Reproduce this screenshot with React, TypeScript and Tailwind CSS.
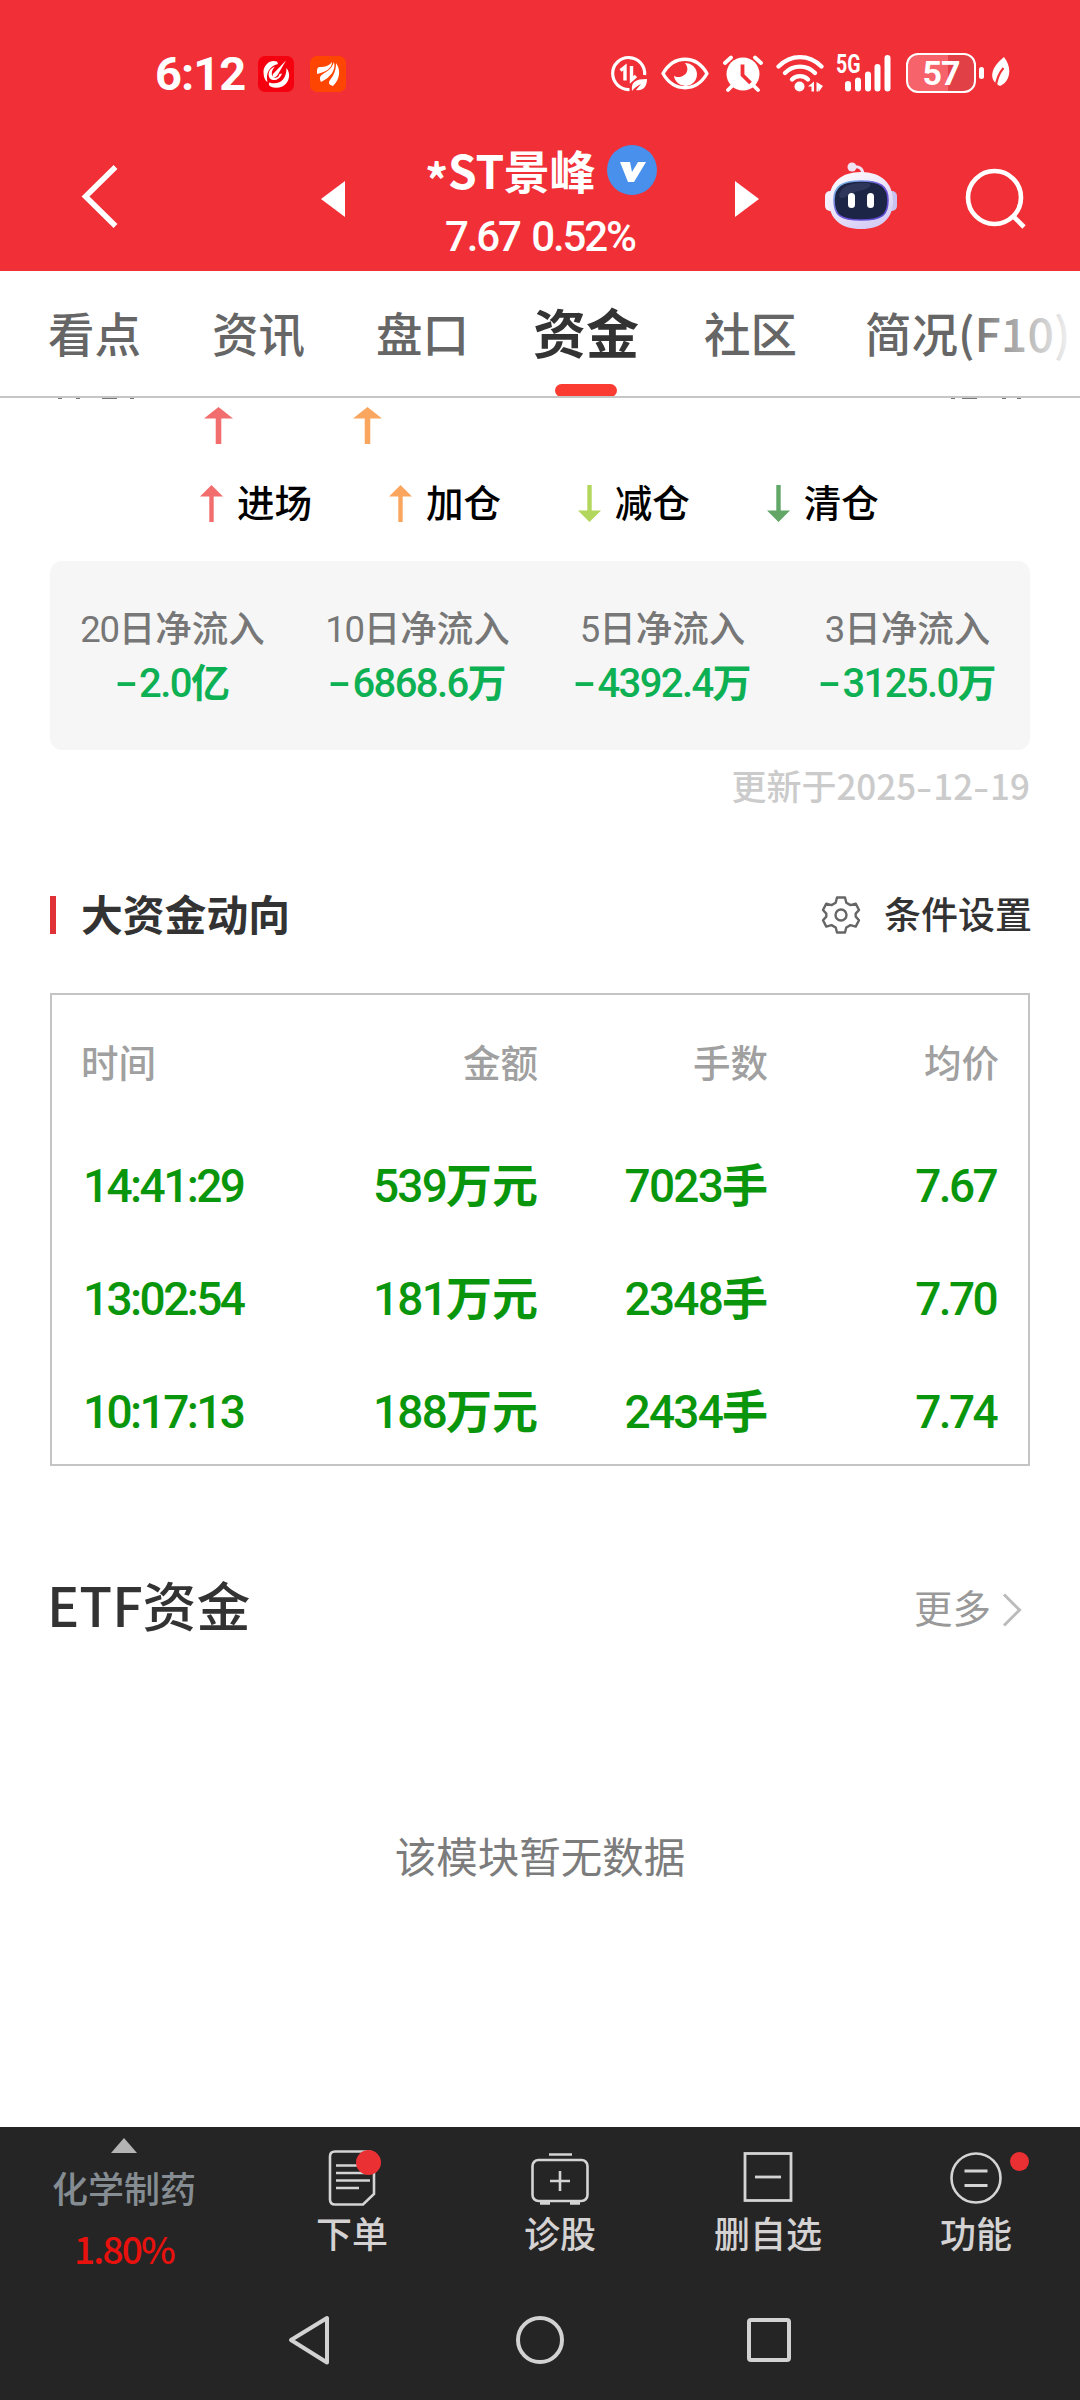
import React from "react";

const CJK = "font-['Noto_Sans_CJK_SC',sans-serif]";
const NUM = "font-['Roboto','Noto_Sans_CJK_SC',sans-serif]";

function Arrow({ color, down = false, wide = false }: { color: string; down?: boolean; wide?: boolean }) {
  return (
    <svg
      width={wide ? 29 : 23}
      height="37"
      viewBox="0 0 24 37"
      preserveAspectRatio="none"
      className={down ? "rotate-180" : ""}
    >
      <path d="M12 0L24 11.5H14.3V37H9.7V11.5H0Z" fill={color} />
    </svg>
  );
}

function Dash() {
  return (
    <span className="inline-block w-[24px] text-left">
      <span className="inline-block origin-left scale-x-[1.7]">-</span>
    </span>
  );
}

/* ---------- status bar ---------- */

function StatusBar() {
  return (
    <div className="flex h-[147px] pt-[52px] text-white">
      <div className={`${NUM} ml-[155px] h-[44px] w-[103px] text-[47px] leading-[44px] font-bold tracking-[-1px]`}>6:12</div>
      <svg width="36" height="36" viewBox="0 0 36 36" className="mt-1">
        <rect width="36" height="36" rx="7" fill="#f5000f" />
        <path d="M19 5.500C12 3 6 9 5.500 15c0 5 1 9 4 11C7.500 18 11 10 20 8Z" fill="#fff" />
        <path d="M28 4.500L19 20l-5.500 3 1.500-5Z" fill="#fff" />
        <path d="M28.500 12c4 5 3 11 0 15-4 5-11 6-16 3.500-2-1.500-2-3-1-4 9 3 17-2 17-14.500Z" fill="#fff" />
        <path d="M17 10.500c-6 2-8 8-5 12 4 3.500 10 1 12-5l-2.500 .5c-1 4-4.500 5-7 2.500-1.500-3-.5-7 2.500-10Z" fill="#fff" />
      </svg>
      <svg width="36" height="36" viewBox="0 0 36 36" className="mt-1 ml-4">
        <rect width="36" height="36" rx="7" fill="#ff4502" />
        <path d="M7 18c0-5 0-7 3-7 5 0 9-1 12-5 0 7-7 10-15 12Z" fill="#fff" />
        <path d="M11 26c-2-4-1-6 2-8 5-3 9-6 11-12 2 8-3 15-13 20Z" fill="#fff" />
        <path d="M23 30c-4-1-5-3-3-6 4-5 6-10 6-17 5 7 4 16-3 23Z" fill="#fff" />
      </svg>
      <svg width="38" height="38" viewBox="0 0 38 38" className="mt-[3px] ml-[264px]" fill="none" stroke="#fff">
        <path d="M19.5 34.5A16 16 0 1 1 34.6 20" strokeWidth="3.2" />
        <path d="M10.500 15.500l4.500-3.500v13.500M21.500 11v14l4.500-4" strokeWidth="3.400" />
        <path d="M22 36c-1-9 3-12 15-12 0 9-5 12-11 11l5-6c-4 2-7 4-9 7Z" fill="#fff" stroke="none" />
      </svg>
      <svg width="48" height="34" viewBox="0 0 48 34" className="mt-[5px] ml-[13px]" fill="none" stroke="#fff">
        <path d="M2 16.500C13-2.500 35-2.500 46 16.500C35 35.500 13 35.500 2 16.500Z" strokeWidth="3.400" strokeLinejoin="round" />
        <path d="M24 6a11.500 11.500 0 1 1-11 12.500c3 3 11 1.500 13-4 1-3 0-6-2-8.500Z" fill="#fff" stroke="none" />
      </svg>
      <svg width="40" height="38" viewBox="0 0 40 38" className="mt-[3px] ml-[14px]" fill="none" stroke="#fff">
        <circle cx="20" cy="19" r="16.500" fill="#fff" stroke="none" />
        <path d="M2 8l6-5.500M38 8l-6-5.500M5 35l5-5M35 35l-5-5" strokeWidth="3.800" strokeLinecap="round" />
        <path d="M19.500 9.500v10.500l8 8" stroke="#f12f37" strokeWidth="3.800" />
      </svg>
      <svg width="48" height="38" viewBox="0 0 48 38" className="mt-[3px] ml-[13px]" fill="none" stroke="#fff" strokeLinecap="round">
        <path d="M2.500 11.500C15-1 33-1 45.500 11.500M9 18c8-8.500 22-8.500 30 0M16 24.500c4-4.500 12-4.500 16 0" strokeWidth="4.200" />
        <circle cx="23.500" cy="31.500" r="5" fill="#fff" stroke="none" />
        <path d="M32 31.500l6-5v10h-2.500v-5ZM40.500 27l6.500 4-4 5.500v-4l-.5 4h-2Z" fill="#fff" stroke="none" />
      </svg>
      <div className="relative mt-[3px] ml-[12px] h-[37px] w-[56px]">
        <span className={`${NUM} absolute top-0 left-0 origin-left scale-x-[0.78] text-[25px] leading-[19px] font-bold`}>5G</span>
        <svg width="56" height="37" viewBox="0 0 56 37" stroke="#fff" strokeWidth="6" strokeLinecap="round">
          <path d="M12 29v4.500M22 25.500v8M32 19.500v14M41.500 12v21.500M51.500 3v30.500" />
        </svg>
      </div>
      <div
        className={`${NUM} mt-px ml-[14px] flex h-[40px] w-[70px] items-center justify-center rounded-[12px] border-[2.500px] border-white bg-[linear-gradient(90deg,#f6636a_0_60%,#e04046_60%)] text-[34px] leading-[34px] font-bold tracking-[-1px]`}
      >
        57
      </div>
      <div className="mt-[15px] ml-[3px] h-[12px] w-[5px] rounded-full bg-white" />
      <svg width="22" height="32" viewBox="0 0 22 32" className="mt-[5px] ml-[6px]">
        <path d="M14 0c8 10 7 24-4 29C-1 24-1 12 14 0Z" fill="#fff" />
        <path d="M13.500 11C9 16 6.500 22 5.500 31" fill="none" stroke="#f12f37" strokeWidth="2.200" />
      </svg>
    </div>
  );
}

/* ---------- title bar ---------- */

function Robot() {
  return (
    <svg width="74" height="68" viewBox="0 0 74 68">
      <defs>
        <linearGradient id="shell" x1="0" y1="0" x2="0.6" y2="1">
          <stop offset="0" stopColor="#ffffff" />
          <stop offset="0.55" stopColor="#ece6fa" />
          <stop offset="1" stopColor="#d5cdf5" />
        </linearGradient>
        <linearGradient id="rim" x1="0" y1="0" x2="1" y2="1">
          <stop offset="0" stopColor="#7ccbe8" />
          <stop offset="0.5" stopColor="#7356dc" />
          <stop offset="1" stopColor="#5546c8" />
        </linearGradient>
      </defs>
      <path d="M29 5c7-1 10 2 10 8" fill="none" stroke="#efe3f4" strokeWidth="3" />
      <circle cx="28" cy="5" r="4.500" fill="#efe3f4" />
      <rect x="1" y="29" width="12" height="20" rx="5" fill="#f4effb" />
      <rect x="61" y="29" width="12" height="20" rx="5" fill="#c9c2f0" />
      <path d="M37 10c20 0 32 11 32 29S57 67 37 67 5 57 5 39 17 10 37 10Z" fill="url(#shell)" />
      <path d="M37 19c19 0 27 5 27 19 0 15-6 20-27 20S10 53 10 38c0-14 8-19 27-19Z" fill="#1c2546" stroke="url(#rim)" strokeWidth="1.600" />
      <path d="M15 33c4-11 14-12 26-12 10 0 5 6-6 8-9 1-18 12-20 4Z" fill="#3a4468" opacity="0.6" />
      <rect x="24" y="31" width="7" height="15" rx="3.500" fill="#fff" />
      <rect x="43" y="31" width="7" height="15" rx="3.500" fill="#fff" />
    </svg>
  );
}

function TitleBar() {
  return (
    <div className="flex h-[124px] items-start text-white">
      <svg width="38" height="66" viewBox="0 0 38 66" className="mt-[17px] ml-[81px]" fill="none" stroke="#fff" strokeWidth="5.500">
        <path d="M34.500 3L4.500 32.500L34.500 62" />
      </svg>
      <svg width="24" height="36" viewBox="0 0 24 36" className="mt-[34px] ml-[202px]" fill="#fff">
        <path d="M24 0V36L0 18Z" />
      </svg>
      <div className="mt-[-2px] ml-[81px] w-[234px]">
        <div className="flex h-[50px] items-center">
          <span className={`${CJK} -mt-[3px] w-[181px] text-[46px] leading-[50px] font-bold tracking-[-0.300px] whitespace-nowrap`}>
            <span className="-ml-px inline-block translate-y-[9px]">*</span>ST景峰
          </span>
          <svg width="50" height="50" viewBox="0 0 50 50">
            <circle cx="25" cy="25" r="25" fill="#4890ec" />
            <path d="M13 17h10l2 10 6-10h8L27 37h-6Z" fill="#fff" />
          </svg>
        </div>
        <div className={`${NUM} mt-[20px] ml-[19px] h-[44px] text-[42px] leading-[44px] font-medium tracking-[-2.100px] whitespace-nowrap [word-spacing:3px]`}>
          7.67 0.52%
        </div>
      </div>
      <svg width="24" height="36" viewBox="0 0 24 36" className="mt-[34px] ml-[75px]" fill="#fff">
        <path d="M0 0V36L24 18Z" />
      </svg>
      <div className="mt-[15px] ml-[65px]">
        <Robot />
      </div>
      <svg width="62" height="62" viewBox="0 0 62 62" className="mt-[21px] ml-[67px]" fill="none" stroke="#fff" strokeWidth="4.600">
        <circle cx="29.500" cy="29.500" r="26.500" />
        <path d="M48 48L59 59" />
      </svg>
    </div>
  );
}

/* ---------- tabs ---------- */

const tabs = ["看点", "资讯", "盘口", "资金", "社区", "简况(F10)"];

function Tabs() {
  return (
    <div className="relative flex h-[127px] shrink-0 items-center overflow-hidden border-b-2 border-[#c6c6c6] bg-white">
      <div className={`${CJK} ml-[48px] flex h-full items-center text-[46.500px] font-medium whitespace-nowrap text-[#666]`}>
        {tabs.map((t) =>
          t === "资金" ? (
            <div key={t} className="relative mr-[65px] -ml-[7px] flex h-full items-center text-[53px] font-bold text-[#333]">
              <span className="-mt-[3px]">{t}</span>
              <div className="absolute -bottom-px left-[22px] h-[13px] w-[62px] rounded-[7px] bg-[#fa3c32]" />
            </div>
          ) : (
            <div key={t} className="-mt-[4px] mr-[71px] last:-ml-[3px]">
              {t}
            </div>
          ),
        )}
      </div>
      <div className="absolute top-0 right-0 h-full w-[115px] bg-gradient-to-r from-white/0 to-white" />
    </div>
  );
}

/* ---------- legend ---------- */

const legend = [
  { label: "进场", color: "#f26d6d", down: false },
  { label: "加仓", color: "#fba65f", down: false },
  { label: "减仓", color: "#b3d65c", down: true },
  { label: "清仓", color: "#62a768", down: true },
];

function Legend() {
  return (
    <div className="h-[163px]">
      <svg width="1080" height="2" viewBox="0 0 1080 2" className="block" fill="#777">
        <path d="M58 0h4v1h-4ZM76 0h4v1h-4ZM102 0h15v1h-15ZM130 0h4v1h-4ZM951 0h4v1h-4ZM962 0h15v1h-15ZM1002 0h4v1h-4ZM1017 0h4v1h-4Z" />
      </svg>
      <div className="mt-[7px] ml-[204px] flex h-[37px] gap-[120px]">
        <Arrow color="#f26d6d" wide />
        <Arrow color="#fba65f" wide />
      </div>
      <div className="mt-[31px] ml-[200px] flex h-[56px] items-center">
        {legend.map((l) => (
          <div key={l.label} className="flex w-[188.900px] items-center">
            <Arrow color={l.color} down={l.down} />
            <span className={`${CJK} ml-[14px] -translate-y-[2px] text-[37.500px] leading-[56px] font-medium text-black`}>{l.label}</span>
          </div>
        ))}
      </div>
    </div>
  );
}

/* ---------- inflow card ---------- */

const flows = [
  { days: "20", value: "2.0", unit: "亿" },
  { days: "10", value: "6868.6", unit: "万" },
  { days: "5", value: "4392.4", unit: "万" },
  { days: "3", value: "3125.0", unit: "万" },
];

function InflowCard() {
  return (
    <div className="mx-[50px]">
      <div className={`${NUM} grid h-[189px] grid-cols-4 rounded-[12px] bg-[#f6f6f6] pt-[42px] text-center`}>
        {flows.map((f) => (
          <div key={f.days} className="whitespace-nowrap">
            <div className="h-[54px] text-[36.500px] leading-[54px] font-medium text-[#777]">
              <span className="font-normal tracking-[-1.200px]">{f.days}</span>日净流入
            </div>
            <div className="h-[54px] text-[40px] leading-[54px] font-medium text-[#0eb054]">
              <Dash />
              <span className="tracking-[-1.600px]">{f.value}</span>
              <span className="text-[39px] font-bold">{f.unit}</span>
            </div>
          </div>
        ))}
      </div>
      <div className={`${CJK} mt-[9px] h-[52px] text-right text-[35px] leading-[52px] font-medium text-[#cbcbcb]`}>
        更新于2025
        <span className="inline-block w-[17px] text-left">
          <span className="inline-block origin-left scale-x-[1.3]">-</span>
        </span>
        12
        <span className="inline-block w-[17px] text-left">
          <span className="inline-block origin-left scale-x-[1.3]">-</span>
        </span>
        19
      </div>
    </div>
  );
}

/* ---------- large orders ---------- */

const orders = [
  ["14:41:29", "539万元", "7023手", "7.67"],
  ["13:02:54", "181万元", "2348手", "7.70"],
  ["10:17:13", "188万元", "2434手", "7.74"],
];

function Gear() {
  return (
    <svg width="40" height="40" viewBox="0 0 40 40" fill="none" stroke="#666" strokeWidth="2.400" strokeLinejoin="round">
      <path d="M16 2.500h8l1.300 5.200 4.200 2.400 5.200-1.500 3.300 6.400-3.300 3.600v3l3.300 3.600-3.300 6.400-5.200-1.500-4.200 2.400L24 37.500h-8l-1.300-5-4.200-2.400-5.200 1.500L2 25.200l3.300-3.600v-3L2 15l3.300-6.400 5.200 1.500 4.200-2.400Z" />
      <circle cx="20" cy="20" r="5.500" />
    </svg>
  );
}

function LargeOrders() {
  return (
    <div className="mx-[50px] mt-[64px]">
      <div className={`${CJK} flex h-[80px] items-center`}>
        <div className="h-[38px] w-[6px] bg-[#e03236]" />
        <div className="-mt-[4px] ml-[25px] text-[41.800px] leading-[60px] font-bold text-[#333]">大资金动向</div>
        <div className="flex-1" />
        <Gear />
        <div className="-mt-[4px] -mr-[2px] ml-[23px] text-[37px] leading-[60px] font-medium text-[#333]">条件设置</div>
      </div>
      <div className={`${NUM} mt-[38px] h-[473px] border-2 border-[#c4c4c4] px-[31px]`}>
        <div className="grid h-[134px] grid-cols-[227px_228px_230px_231px] pt-[2px] text-right text-[37.500px] leading-[134px] font-medium text-[#a0a0a0]">
          <div className="-ml-[2px] text-left">时间</div>
          <div>金额</div>
          <div>手数</div>
          <div>均价</div>
        </div>
        {orders.map((o) => (
          <div
            key={o[0]}
            className="grid h-[113px] grid-cols-[227px_228px_230px_228px] pt-px text-right text-[46px] leading-[113px] font-medium text-[#0a960c]"
          >
            <div className="text-left tracking-[-2.600px]">{o[0]}</div>
            {o.slice(1).map((v) => {
              const [, num, unit] = v.match(/^([\d.]+)(.*)$/) as RegExpMatchArray;
              return (
                <div key={v}>
                  <span className={unit ? "tracking-[-1.800px]" : "tracking-[-2.600px]"}>{num}</span>
                  <span className="font-bold">{unit}</span>
                </div>
              );
            })}
          </div>
        ))}
      </div>
    </div>
  );
}

/* ---------- ETF ---------- */

function EtfSection() {
  return (
    <div className={`${CJK} flex-1`}>
      <div className="mt-[98px] mr-[58px] ml-[47px] flex h-[80px] items-center">
        <div className="text-[53.800px] leading-[80px] font-medium text-[#333]">ETF资金</div>
        <div className="flex-1" />
        <div className="mt-[3px] text-[38.500px] leading-[60px] text-[#999]">更多</div>
        <svg width="20" height="34" viewBox="0 0 20 34" className="mt-[11px] ml-[11px]" fill="none" stroke="#bbb" strokeWidth="3">
          <path d="M2 1.500L17.500 17L2 32.500" />
        </svg>
      </div>
      <div className="mt-[179px] text-center text-[41.500px] leading-[64px] text-[#7c7c7c]">该模块暂无数据</div>
    </div>
  );
}

/* ---------- bottom bar ---------- */

function OrderIcon() {
  return (
    <svg width="54" height="56" viewBox="0 0 54 56" className="translate-x-[2px]" fill="none" stroke="#d4d4d4" strokeWidth="2.600">
      <path d="M8 1.500h34q5 0 5 5V44L36 54.500H8q-5 0-5-5v-43q0-5 5-5Z" />
      <path d="M9 15.500h22M9 23h30M9 30.500h34M9 38h23" />
      <circle cx="41.500" cy="12.500" r="12.500" fill="#ea3033" stroke="none" />
    </svg>
  );
}

function DiagnoseIcon() {
  return (
    <svg width="58" height="56" viewBox="0 0 58 56" fill="none" stroke="#d4d4d4" strokeWidth="2.600">
      <rect x="1.500" y="10" width="55" height="41" rx="6" />
      <path d="M18 4.500h23M29 21v20M19 31h20" />
      <path d="M9 53h10M39 53h10" strokeWidth="3.500" />
    </svg>
  );
}

function RemoveIcon() {
  return (
    <svg width="50" height="56" viewBox="0 0 50 56" fill="none" stroke="#d4d4d4" strokeWidth="2.800">
      <rect x="2" y="3.500" width="46" height="47" />
      <path d="M12 27h26" />
    </svg>
  );
}

function MoreIcon() {
  return (
    <svg width="52" height="56" viewBox="0 0 52 56" fill="none" stroke="#d4d4d4" strokeWidth="2.600">
      <circle cx="26" cy="28" r="24.500" />
      <path d="M14.500 21h23M14.500 35.500h23" strokeWidth="3" />
    </svg>
  );
}

const actions = [
  { label: "下单", icon: <OrderIcon /> },
  { label: "诊股", icon: <DiagnoseIcon /> },
  { label: "删自选", icon: <RemoveIcon /> },
  { label: "功能", icon: <MoreIcon />, dot: true },
];

function BottomBar() {
  return (
    <div className="h-[273px] shrink-0 bg-[#252525]">
      <div className={`${CJK} flex h-[164px]`}>
        <div className="flex w-[248px] flex-col items-center pt-[11px]">
          <svg width="26" height="15" viewBox="0 0 26 15">
            <path d="M13 0L26 15H0Z" fill="#b4b4b4" />
          </svg>
          <div className="mt-[9px] text-[36px] leading-[50px] font-medium text-[#858d93]">化学制药</div>
          <div className="mt-[11px] text-[37px] leading-[50px] font-medium tracking-[-1.800px] text-[#e9110d]">1.80%</div>
        </div>
        {actions.map((a) => (
          <div key={a.label} className="relative flex w-[208px] flex-col items-center pt-[23px]">
            {a.icon}
            <div className="mt-px text-[36px] leading-[50px] font-medium text-[#d4d2d2]">{a.label}</div>
            {a.dot && <div className="absolute top-[25px] left-[138px] size-[19px] rounded-full bg-[#ea3033]" />}
          </div>
        ))}
      </div>
      <div className="ml-[286px] flex h-[98px] items-center">
        <svg width="46" height="52" viewBox="0 0 46 52" fill="none" stroke="#d2d2d2" strokeWidth="4" strokeLinejoin="round">
          <path d="M41 4V48.500L5 26Z" />
        </svg>
        <div className="ml-[184px] size-[48px] rounded-full border-4 border-[#d2d2d2]" />
        <div className="ml-[183px] size-[44px] rounded-[4px] border-4 border-[#d2d2d2]" />
      </div>
    </div>
  );
}

export default function App() {
  return (
    <div className="flex h-[2400px] w-[1080px] flex-col overflow-hidden bg-white">
      <div className="h-[271px] shrink-0 bg-[#f12f37]">
        <StatusBar />
        <TitleBar />
      </div>
      <Tabs />
      <Legend />
      <InflowCard />
      <LargeOrders />
      <EtfSection />
      <BottomBar />
    </div>
  );
}
